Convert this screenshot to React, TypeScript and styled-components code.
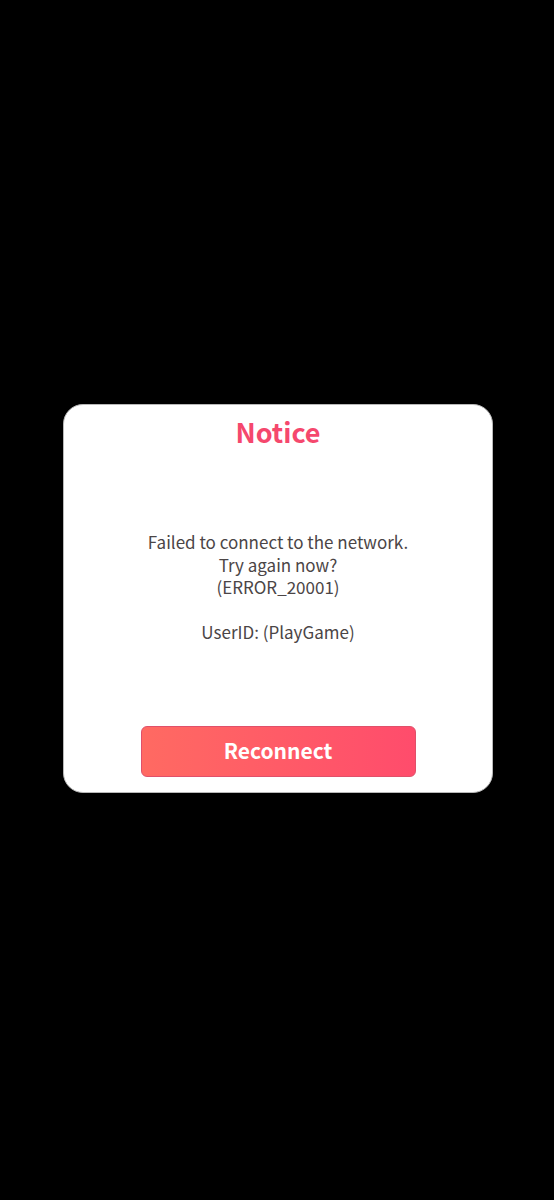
import React from "react";
import styled, { createGlobalStyle } from "styled-components";

const Global = createGlobalStyle`
  html, body { margin: 0; padding: 0; background: #000; }
  body { font-family: "Noto Sans CJK JP", "Noto Sans", sans-serif; }
`;

const Screen = styled.div`
  min-height: 1200px;
  display: flex;
  align-items: center;
  justify-content: center;
  padding-left: 2px;
  box-sizing: border-box;
  background: #000;
`;

const Card = styled.div`
  width: 430px;
  height: 389px;
  box-sizing: border-box;
  background: #fff;
  border: 1px solid #b8b8b8;
  border-radius: 20px;
  display: flex;
  flex-direction: column;
  align-items: center;
  padding: 7px 0 15px;
  margin-top: -3px;
`;

const Title = styled.h1`
  margin: 0;
  font-size: 27px;
  line-height: 40px;
  font-weight: 700;
  color: #f5486d;
`;

const Message = styled.div`
  flex: 1;
  margin-top: 79px;
  text-align: center;
  font-size: 17px;
  line-height: 22.5px;
  color: #4b4546;
`;

const Line = styled.div`
  white-space: nowrap;
`;

const Spacer = styled.div`
  height: 22px;
`;

const Button = styled.button`
  width: 275px;
  height: 51px;
  border: 1px solid #e0506a;
  border-radius: 6px;
  background: linear-gradient(90deg, #ff6a62 0%, #ff4c6c 100%);
  color: #fff;
  font-family: inherit;
  font-size: 21px;
  font-weight: 700;
  display: flex;
  align-items: center;
  justify-content: center;
  padding: 0 0 4px;
  cursor: pointer;
`;

export default function App() {
  return (
    <>
      <Global />
      <Screen>
        <Card>
          <Title>Notice</Title>
          <Message>
            <Line>Failed to connect to the network.</Line>
            <Line>Try again now?</Line>
            <Line>(ERROR_20001)</Line>
            <Spacer />
            <Line>UserID: (PlayGame)</Line>
          </Message>
          <Button>Reconnect</Button>
        </Card>
      </Screen>
    </>
  );
}
